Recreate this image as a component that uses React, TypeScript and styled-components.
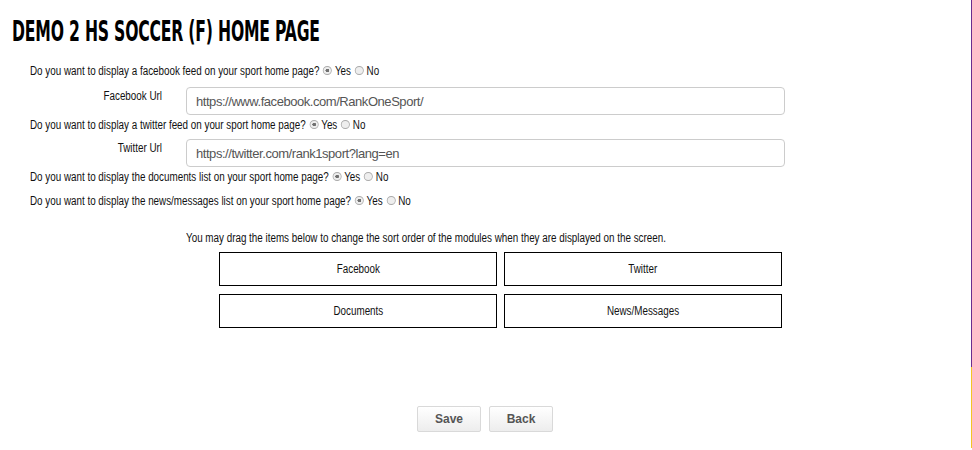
import React, { useState } from "react";
import styled, { createGlobalStyle } from "styled-components";

const GlobalStyle = createGlobalStyle`
  html, body {
    margin: 0;
    padding: 0;
    background: #ffffff;
  }
  body {
    font-family: "Liberation Sans", Arial, sans-serif;
    color: #111;
  }
`;

// the page uses a narrow sans; squeeze Liberation Sans to its width
const NARROW = 0.82;

type Choice = "yes" | "no";

const questions = {
  facebook: "Do you want to display a facebook feed on your sport home page?",
  twitter: "Do you want to display a twitter feed on your sport home page?",
  documents: "Do you want to display the documents list on your sport home page?",
  news: "Do you want to display the news/messages list on your sport home page?",
};

const modules = ["Facebook", "Twitter", "Documents", "News/Messages"];

const YesNo: React.FC<{
  name: string;
  question: string;
  value: Choice;
  onChange: (v: Choice) => void;
  after?: number;
}> = ({ name, question, value, onChange, after }) => (
  <Question $after={after}>
    <span>{question}</span>
    <Radio
      type="radio"
      name={name}
      checked={value === "yes"}
      onChange={() => onChange("yes")}
    />
    <span>Yes</span>
    <Radio
      type="radio"
      name={name}
      checked={value === "no"}
      onChange={() => onChange("no")}
    />
    <span>No</span>
  </Question>
);

const App: React.FC = () => {
  const [answers, setAnswers] = useState<Record<string, Choice>>({
    facebook: "yes",
    twitter: "yes",
    documents: "yes",
    news: "yes",
  });
  const [facebookUrl, setFacebookUrl] = useState(
    "https://www.facebook.com/RankOneSport/"
  );
  const [twitterUrl, setTwitterUrl] = useState(
    "https://twitter.com/rank1sport?lang=en"
  );

  const setAnswer = (key: string) => (v: Choice) =>
    setAnswers({ ...answers, [key]: v });

  return (
    <Shell>
      <GlobalStyle />
      <Page>
        <Title>Demo 2 HS Soccer (F) Home Page</Title>

        <Form>
          <YesNo
            name="facebook"
            question={questions.facebook}
            value={answers.facebook}
            onChange={setAnswer("facebook")}
          />
          <UrlRow $top={8}>
            <UrlLabel>Facebook Url</UrlLabel>
            <UrlInput
              value={facebookUrl}
              onChange={(e) => setFacebookUrl(e.target.value)}
            />
          </UrlRow>
          <YesNo
            name="twitter"
            question={questions.twitter}
            value={answers.twitter}
            onChange={setAnswer("twitter")}
          />
          <UrlRow $top={6}>
            <UrlLabel>Twitter Url</UrlLabel>
            <UrlInput
              value={twitterUrl}
              onChange={(e) => setTwitterUrl(e.target.value)}
            />
          </UrlRow>
          <YesNo
            name="documents"
            question={questions.documents}
            value={answers.documents}
            onChange={setAnswer("documents")}
            after={8}
          />
          <YesNo
            name="news"
            question={questions.news}
            value={answers.news}
            onChange={setAnswer("news")}
          />
        </Form>

        <SortArea>
          <SortNote>
            You may drag the items below to change the sort order of the
            modules when they are displayed on the screen.
          </SortNote>
          <ModuleGrid>
            {modules.map((m) => (
              <ModuleBox key={m}>
                <ModuleName>{m}</ModuleName>
              </ModuleBox>
            ))}
          </ModuleGrid>
        </SortArea>

        <Actions>
          <ActionButton>Save</ActionButton>
          <ActionButton>Back</ActionButton>
        </Actions>
      </Page>
      <Edge>
        <EdgeSegment $color="#6a2c8e" $height={367} />
        <EdgeSegment $color="#f2c525" $height={81} />
      </Edge>
    </Shell>
  );
};

export default App;

const Shell = styled.div`
  display: flex;
  width: 972px;
  height: 450px;
  overflow: hidden;
`;

const Page = styled.div`
  flex: 1;
  display: flex;
  flex-direction: column;
  padding: 16px 0 0 12px;
`;

/* display face is very narrow, squeeze the condensed bold to fit */
const Title = styled.h1`
  margin: 0;
  font-family: "DejaVu Sans Condensed", "Liberation Sans", sans-serif;
  font-size: 28px;
  font-weight: bold;
  text-transform: uppercase;
  letter-spacing: -0.3px;
  line-height: 32px;
  color: #000;
  white-space: nowrap;
  transform: scaleX(0.62);
  transform-origin: 0 50%;
`;

const Form = styled.div`
  display: flex;
  flex-direction: column;
  margin-top: 15px;
  width: 773px;
`;

const Question = styled.div<{ $after?: number }>`
  display: flex;
  align-items: center;
  gap: 3.5px;
  padding-left: ${18 / NARROW}px;
  height: 16px;
  font-size: 12px;
  white-space: nowrap;
  transform: scaleX(${NARROW});
  transform-origin: 0 50%;
  margin-bottom: ${(p) => p.$after ?? 0}px;
`;

const Radio = styled.input`
  appearance: none;
  width: ${9 / NARROW}px;
  height: 9px;
  margin: 0 0 0 1px;
  border: 1px solid #aaaaaa;
  border-radius: 50%;
  background: #eeeeee;
  position: relative;
  top: -1px;

  &:checked {
    background: radial-gradient(ellipse, #707070 0 2px, #eeeeee 2.5px);
  }
`;

const UrlRow = styled.div<{ $top: number }>`
  display: flex;
  align-items: flex-start;
  margin: ${(p) => p.$top}px 0 2px;
`;

const UrlLabel = styled.label`
  width: 150px;
  margin-right: 24px;
  text-align: right;
  font-size: 12px;
  padding-top: 2px;
  white-space: nowrap;
  transform: scaleX(${NARROW});
  transform-origin: 100% 50%;
`;

const UrlInput = styled.input`
  box-sizing: border-box;
  flex: 1;
  height: 28px;
  padding: 0 9px;
  border: 1px solid #cccccc;
  border-radius: 4px;
  font-family: "Liberation Sans", Arial, sans-serif;
  font-size: 13px;
  letter-spacing: -0.45px;
  color: #555555;
  outline: none;
`;

const SortArea = styled.div`
  display: flex;
  flex-direction: column;
  width: 960px;
  margin-top: 22px;
  margin-left: -12px;
`;

const SortNote = styled.div`
  font-size: 12px;
  height: 16px;
  margin-left: 186px;
  white-space: nowrap;
  transform: scaleX(${NARROW});
  transform-origin: 0 50%;
`;

const ModuleGrid = styled.div`
  display: grid;
  grid-template-columns: 278px 278px;
  column-gap: 7px;
  row-gap: 8px;
  margin: 5px 0 0 219px;
`;

const ModuleBox = styled.div`
  height: 34px;
  border: 1px solid #000;
  box-sizing: border-box;
  display: flex;
  align-items: center;
  justify-content: center;
  font-size: 12px;
  cursor: move;
  background: #fff;
`;

const ModuleName = styled.span`
  display: inline-block;
  transform: scaleX(${NARROW});
`;

const Actions = styled.div`
  display: flex;
  gap: 8px;
  margin-top: 78px;
  margin-left: 405px;
`;

const ActionButton = styled.button`
  width: 64px;
  height: 26px;
  border: 1px solid #d9d9d9;
  border-radius: 2px;
  background: linear-gradient(#ffffff, #ededed);
  font-family: "Liberation Sans", Arial, sans-serif;
  font-size: 12px;
  font-weight: bold;
  color: #555555;
  cursor: pointer;
`;

const Edge = styled.div`
  width: 1px;
  display: flex;
  flex-direction: column;
`;

const EdgeSegment = styled.div<{ $color: string; $height: number }>`
  height: ${(p) => p.$height}px;
  background: ${(p) => p.$color};
`;
